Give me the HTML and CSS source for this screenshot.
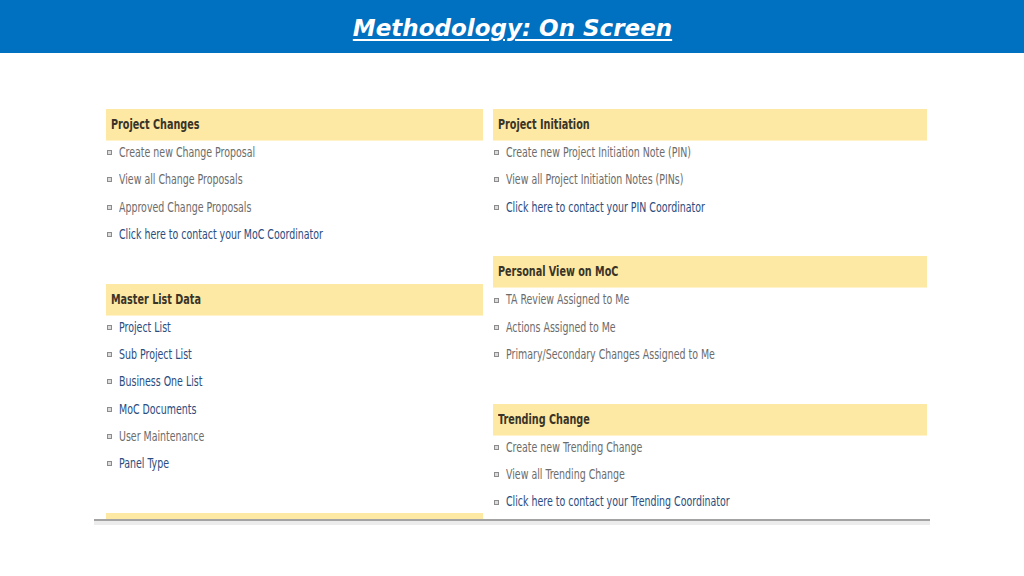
FILE: index.html
```html
<!DOCTYPE html>
<html lang="en">

<head>
    <meta charset="UTF-8">
    <meta name="viewport" content="width=device-width, initial-scale=1.0">
    <title>Methodology: On Screen</title>
    <link rel="stylesheet" href="styles.css">
</head>

<body>
    <header class="topbar">
        <h1 class="title">Methodology: On Screen</h1>
    </header>

    <main class="stage">
        <div class="frame">
            <div class="col col-left">
                <section class="block">
                    <h2 class="block-head"><span class="txt">Project Changes</span></h2>
                    <ul class="links">
                        <li><span class="txt">Create new Change Proposal</span></li>
                        <li><span class="txt">View all Change Proposals</span></li>
                        <li><span class="txt">Approved Change Proposals</span></li>
                        <li class="link"><span class="txt">Click here to contact your MoC Coordinator</span></li>
                    </ul>
                </section>
                <section class="block">
                    <h2 class="block-head"><span class="txt">Master List Data</span></h2>
                    <ul class="links">
                        <li class="link"><span class="txt">Project List</span></li>
                        <li class="link"><span class="txt">Sub Project List</span></li>
                        <li class="link"><span class="txt">Business One List</span></li>
                        <li class="link"><span class="txt">MoC Documents</span></li>
                        <li><span class="txt">User Maintenance</span></li>
                        <li class="link"><span class="txt">Panel Type</span></li>
                    </ul>
                </section>
                <section class="block">
                    <h2 class="block-head"><span class="txt">&nbsp;</span></h2>
                </section>
            </div>

            <div class="col col-right">
                <section class="block">
                    <h2 class="block-head"><span class="txt">Project Initiation</span></h2>
                    <ul class="links">
                        <li><span class="txt">Create new Project Initiation Note (PIN)</span></li>
                        <li><span class="txt">View all Project Initiation Notes (PINs)</span></li>
                        <li class="link"><span class="txt">Click here to contact your PIN Coordinator</span></li>
                    </ul>
                </section>
                <section class="block">
                    <h2 class="block-head"><span class="txt">Personal View on MoC</span></h2>
                    <ul class="links">
                        <li><span class="txt">TA Review Assigned to Me</span></li>
                        <li><span class="txt">Actions Assigned to Me</span></li>
                        <li><span class="txt">Primary/Secondary Changes Assigned to Me</span></li>
                    </ul>
                </section>
                <section class="block">
                    <h2 class="block-head"><span class="txt">Trending Change</span></h2>
                    <ul class="links">
                        <li><span class="txt">Create new Trending Change</span></li>
                        <li><span class="txt">View all Trending Change</span></li>
                        <li class="link"><span class="txt">Click here to contact your Trending Coordinator</span></li>
                    </ul>
                </section>
            </div>
        </div>
        <div class="frame-rule"></div>
    </main>
</body>

</html>
```

FILE: styles.css
```css
body {
    margin: 0;
    background-color: #fff;
    font-family: "DejaVu Sans", Verdana, sans-serif;
}

.topbar {
    height: 53px;
    background-color: #0070c0;
    display: flex;
    justify-content: center;
    align-items: center;
}

.title {
    margin: 3px 0 0 1px;
    color: #fff;
    font-size: 23px;
    font-weight: bold;
    font-style: italic;
    text-decoration: underline;
    text-decoration-thickness: 2px;
    text-underline-offset: 3px;
}

.stage {
    padding-top: 56px;
}

.frame {
    margin-left: 94px;
    width: 836px;
    height: 410px;
    overflow: hidden;
    display: flex;
    gap: 10px;
    padding-left: 12px;
    box-sizing: border-box;
}

.col-left {
    width: 377px;
}

.col-right {
    width: 434px;
}

.block {
    margin-bottom: 35.5px;
}

.block-head {
    margin: 0;
    height: 32px;
    line-height: 31px;
    padding-left: 5px;
    background-color: #fde9a3;
    border-bottom: 1px solid #fff3cc;
    box-sizing: border-box;
    color: #3a3428;
    font-family: "DejaVu Sans Condensed", "DejaVu Sans", sans-serif;
    font-size: 14.5px;
    font-weight: bold;
}

.txt {
    display: inline-block;
    white-space: nowrap;
    transform: scaleX(0.74);
    transform-origin: left center;
}

.links {
    list-style: none;
    margin: -2px 0 0;
    padding: 0;
}

.links li {
    height: 27.3px;
    line-height: 27.3px;
    display: flex;
    align-items: center;
    gap: 7px;
    padding-left: 1px;
    color: #6c6c6c;
    font-family: "DejaVu Sans Condensed", "DejaVu Sans", sans-serif;
    font-size: 14.2px;
}

.links li::before {
    content: "";
    width: 3px;
    height: 3px;
    border: 1px solid #8c8c8c;
    background-color: #dcdcdc;
    flex: none;
}

.links li.link {
    color: #2b4c7e;
}

.frame-rule {
    margin-left: 94px;
    width: 836px;
    height: 4px;
    border-top: 2px solid #a3a3a3;
    background-color: #ececec;
}
```
